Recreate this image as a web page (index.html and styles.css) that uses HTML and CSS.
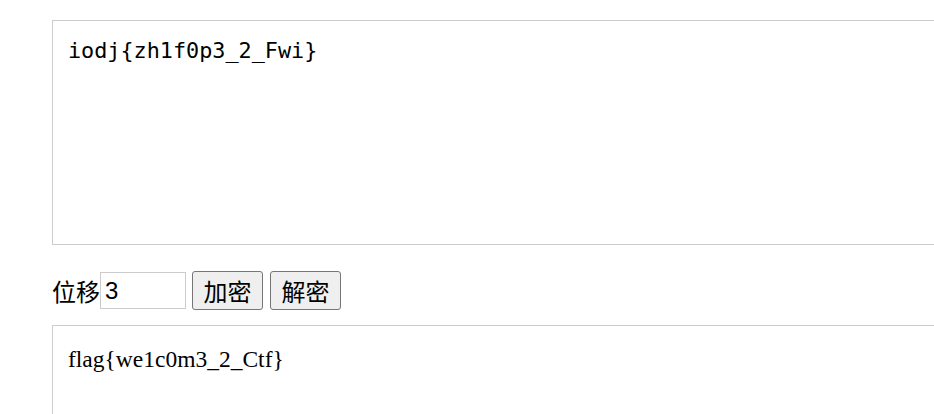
FILE: index.html
```html
<!DOCTYPE html>
<html lang="zh">
<head>
    <meta charset="UTF-8">
    <title>凯撒密码</title>
    <link rel="stylesheet" href="styles.css">
</head>
<body>
    <textarea class="cipher" id="input">iodj{zh1f0p3_2_Fwi}</textarea>
    <div class="controls">
        <label for="shift">位移</label><input type="text" id="shift" class="shift" value="3">
        <button type="button" class="btn">加密</button>
        <button type="button" class="btn">解密</button>
    </div>
    <div class="result">flag{we1c0m3_2_Ctf}</div>
</body>
</html>
```

FILE: styles.css
```css
html, body {
    overflow: hidden;
}
body {
    margin: 0;
    padding: 20px 0 0 52px;
    font-family: "Liberation Sans", "Noto Sans CJK SC", sans-serif;
    color: #000;
}
.cipher {
    display: block;
    box-sizing: border-box;
    width: 882px;
    height: 225px;
    margin: 0;
    padding: 17px 15px;
    border: 1px solid #ccc;
    border-right: none;
    font-family: "DejaVu Sans Mono", monospace;
    font-size: 21.8px;
    resize: none;
    outline: none;
}
.controls {
    display: flex;
    align-items: center;
    margin-top: 26px;
    height: 39px;
}
.controls label {
    font-family: "Noto Sans CJK SC", sans-serif;
    font-size: 24px;
}
.shift {
    box-sizing: border-box;
    width: 86px;
    height: 37px;
    padding: 2px 4px;
    margin: 0 6px 0 0;
    border: 1px solid #ccc;
    font-family: "Liberation Sans", sans-serif;
    font-size: 24px;
}
.btn {
    box-sizing: border-box;
    width: 71px;
    height: 39px;
    padding: 0;
    margin-right: 7px;
    background-color: #efefef;
    border: 1px solid #767676;
    border-radius: 3px;
    font-family: "Noto Sans CJK SC", sans-serif;
    font-size: 24px;
    line-height: 1;
}
.result {
    box-sizing: border-box;
    width: 882px;
    height: 89px;
    margin-top: 15px;
    padding: 20px 15px 0;
    border: 1px solid #ccc;
    border-right: none;
    border-bottom: none;
    font-family: "Liberation Serif", serif;
    font-size: 23.5px;
}
```
